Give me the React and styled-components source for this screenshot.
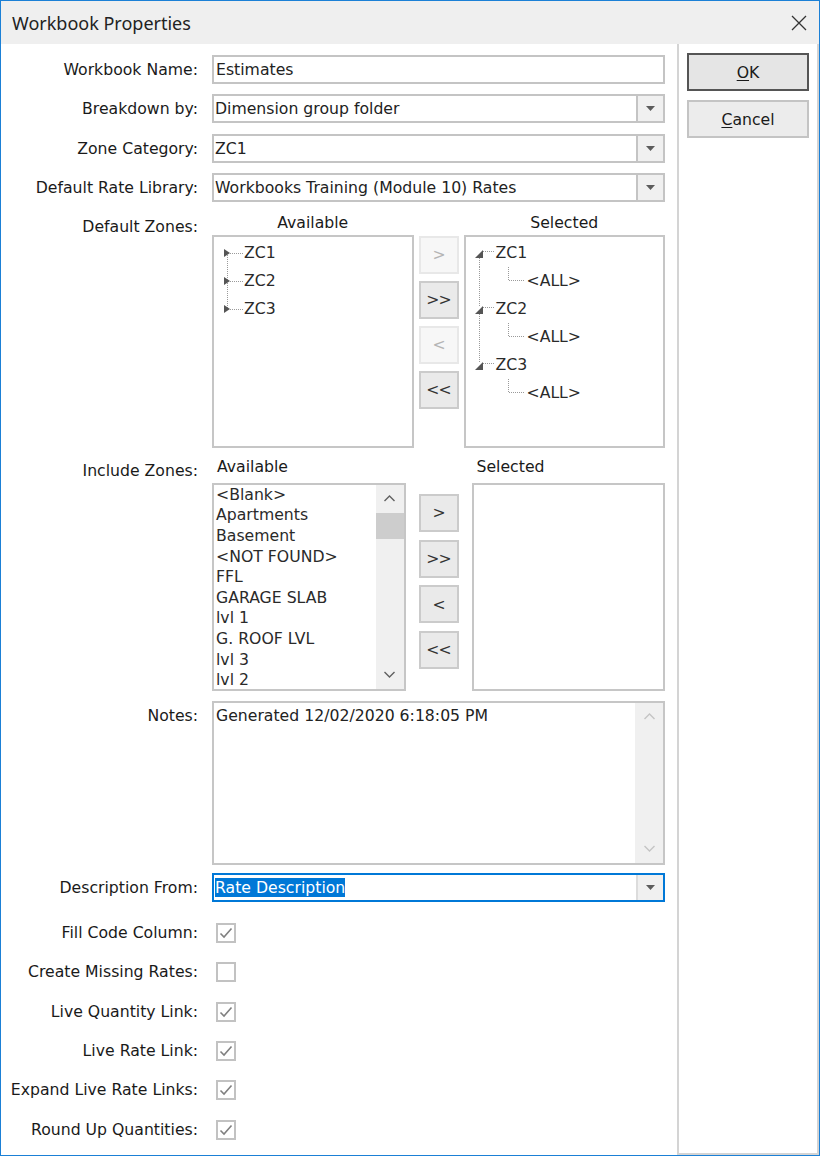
import styled, { createGlobalStyle } from "styled-components";

const GlobalStyle = createGlobalStyle`
  html, body {
    margin: 0;
    padding: 0;
    background: #ffffff;
  }
  body {
    font-family: "DejaVu Sans", Verdana, sans-serif;
    font-size: 15.7px;
    color: #1a1a1a;
  }
  * {
    box-sizing: border-box;
  }
`;

const Window = styled.div`
  width: 820px;
  height: 1156px;
  border: 1px solid #1b80d6;
  display: flex;
  flex-direction: column;
  background: #ffffff;
`;

const TitleBar = styled.div`
  height: 43px;
  flex: none;
  background: #efefef;
  display: flex;
  align-items: center;
  justify-content: space-between;
  padding: 0 12px 0 11px;
  font-family: "Noto Sans", "Open Sans", sans-serif;
  font-size: 18px;
  color: #222;
`;

const CloseIcon = () => (
  <svg width="16" height="16" viewBox="0 0 16 16">
    <path d="M1 1 L15 15 M15 1 L1 15" stroke="#333" strokeWidth="1.3" />
  </svg>
);

const Body = styled.div`
  flex: 1;
  display: flex;
  min-height: 0;
`;

const FormPanel = styled.div`
  width: 676px;
  flex: none;
  padding: 11px 12px 0 0;
  display: flex;
  flex-direction: column;
`;

const SidePanel = styled.div`
  flex: 1;
  border-left: 2px solid #d4d4d4;
  border-right: 2px solid #d4d4d4;
  border-bottom: 2px solid #d4d4d4;
  padding: 9px 8px;
  display: flex;
  flex-direction: column;
  gap: 9px;
`;

const DialogButton = styled.button`
  height: 38px;
  width: 100%;
  font-family: inherit;
  font-size: 15.7px;
  color: #1a1a1a;
  background: ${(p) => (p.$default ? "#e5e5e5" : "#ececec")};
  border: 2px solid ${(p) => (p.$default ? "#555555" : "#c4c4c4")};
  padding: 0;
`;

const Key = styled.span`
  text-decoration: underline;
  text-underline-offset: 2px;
`;

const Row = styled.div`
  display: grid;
  grid-template-columns: 197px 453px;
  column-gap: 14px;
  margin-top: ${(p) => p.$gap || 0}px;
  align-items: start;
`;

const Label = styled.div`
  text-align: right;
  white-space: nowrap;
  line-height: ${(p) => p.$lh || 29}px;
  padding-top: ${(p) => p.$pt || 0}px;
`;

const TextBox = styled.div`
  height: 29px;
  border: 2px solid #c4c4c4;
  padding-left: 2px;
  line-height: 25px;
  color: #222;
  white-space: nowrap;
`;

const Combo = styled.div`
  height: 29px;
  display: flex;
  border: 2px solid ${(p) => (p.$focused ? "#0078d7" : "#c4c4c4")};
  color: #222;
`;

const ComboValue = styled.div`
  flex: 1;
  padding-left: 1px;
  line-height: 25px;
  white-space: nowrap;
  span {
    background: ${(p) => (p.$focused ? "#0078d7" : "transparent")};
    color: ${(p) => (p.$focused ? "#ffffff" : "inherit")};
  }
`;

const DropButton = styled.div`
  width: 27px;
  flex: none;
  border-left: 2px solid ${(p) => (p.$focused ? "#dcdcdc" : "#c4c4c4")};
  background: #f0f0f0;
  display: flex;
  align-items: center;
  justify-content: center;
`;

const ComboBox = ({ value, focused }) => (
  <Combo $focused={focused}>
    <ComboValue $focused={focused}>
      <span>{value}</span>
    </ComboValue>
    <DropButton $focused={focused}>
      <svg width="9" height="5" viewBox="0 0 9 5">
        <path d="M0 0 H9 L4.5 5 Z" fill="#5c5c5c" />
      </svg>
    </DropButton>
  </Combo>
);

const DualList = styled.div`
  display: grid;
  grid-template-columns: 1fr 40px 1fr;
  grid-template-rows: 22px ${(p) => p.$h}px;
  column-gap: ${(p) => p.$cgap}px;
  row-gap: ${(p) => p.$rgap}px;
`;

const ListHeader = styled.div`
  line-height: 22px;
  text-align: ${(p) => (p.$left ? "left" : "center")};
  padding-left: ${(p) => (p.$left ? 5 : 0)}px;
  grid-column: ${(p) => p.$col};
`;

const ListBox = styled.div`
  border: 2px solid #c6c6c6;
  background: #fff;
  display: flex;
  overflow: hidden;
`;

const ListItems = styled.div`
  flex: 1;
  padding: ${(p) => (p.$tree ? "2px 0 0 0" : "0 0 0 2px")};
  color: #2a2a2a;
`;

const ListItem = styled.div`
  line-height: 20.6px;
  white-space: nowrap;
`;

const ButtonColumn = styled.div`
  display: flex;
  flex-direction: column;
  padding-top: ${(p) => p.$pt}px;
  gap: ${(p) => p.$gap}px;
`;

const MoveButton = styled.div`
  height: 38px;
  display: flex;
  align-items: center;
  justify-content: center;
  border: 2px solid ${(p) => (p.$disabled ? "#e8e8e8" : "#cbcbcb")};
  background: ${(p) => (p.$disabled ? "#f7f7f7" : "#eaeaea")};
  color: ${(p) => (p.$disabled ? "#b4b4b4" : "#333")};
  letter-spacing: -1px;
`;

const TreeRow = styled.div`
  height: 28px;
  display: flex;
  align-items: center;
  white-space: nowrap;
`;

const Dotted = ({ d }) => (
  <path d={d} stroke="#9a9a9a" strokeWidth="1" strokeDasharray="1 1" fill="none" />
);

const CollapsedNode = ({ label, first, last }) => (
  <TreeRow>
    <svg width="30" height="28" viewBox="0 0 30 28">
      <Dotted d={`M13.5 ${first ? 14 : 0} V${last ? 14 : 28}`} />
      <Dotted d="M16 14.5 H29" />
      <path d="M10 10 L16 14 L10 18 Z" fill="#555" />
    </svg>
    {label}
  </TreeRow>
);

const ExpandedNode = ({ label, first, last }) => (
  <TreeRow>
    <svg width="30" height="28" viewBox="0 0 30 28">
      {!first && <Dotted d="M13.5 0 V12" />}
      {!last && <Dotted d="M13.5 19 V28" />}
      <Dotted d="M17 12.5 H29" />
      <path d="M17 11 L17 19 L9 19 Z" fill="#555" />
    </svg>
    {label}
  </TreeRow>
);

const ChildNode = ({ label, lastParent }) => (
  <TreeRow>
    <svg width="61" height="28" viewBox="0 0 61 28">
      {!lastParent && <Dotted d="M13.5 0 V28" />}
      <Dotted d="M42.5 0 V13.5 H58" />
    </svg>
    {label}
  </TreeRow>
);

const ScrollBar = styled.div`
  width: 28px;
  flex: none;
  background: #f0f0f0;
  display: flex;
  flex-direction: column;
`;

const ScrollArrow = styled.div`
  height: 28px;
  flex: none;
  display: flex;
  align-items: center;
  justify-content: center;
`;

const ScrollTrack = styled.div`
  flex: 1;
`;

const ScrollThumb = styled.div`
  height: 26px;
  background: #cdcdcd;
`;

const Chevron = ({ up, color }) => (
  <svg width="11" height="7" viewBox="0 0 11 7">
    <path
      d={up ? "M0.5 6 L5.5 1 L10.5 6" : "M0.5 1 L5.5 6 L10.5 1"}
      stroke={color}
      strokeWidth="1.4"
      fill="none"
    />
  </svg>
);

const NotesBox = styled.div`
  height: 164px;
  border: 2px solid #c6c6c6;
  display: flex;
`;

const NotesText = styled.div`
  flex: 1;
  padding: 3px 2px;
  line-height: 20px;
  color: #222;
`;

const CheckRow = styled.div`
  height: 20px;
  display: flex;
  align-items: center;
  padding-left: 4px;
`;

const CheckBox = styled.div`
  width: 20px;
  height: 20px;
  border: 2px solid #c2c2c2;
  background: #fff;
  display: flex;
  align-items: center;
  justify-content: center;
`;

const CheckField = ({ checked }) => (
  <CheckRow>
    <CheckBox>
      {checked && (
        <svg width="14" height="12" viewBox="0 0 14 12">
          <path d="M1.5 6.5 L5 10 L12.5 1.5" stroke="#808080" strokeWidth="1.6" fill="none" />
        </svg>
      )}
    </CheckBox>
  </CheckRow>
);

const includeItems = [
  "<Blank>",
  "Apartments",
  "Basement",
  "<NOT FOUND>",
  "FFL",
  "GARAGE SLAB",
  "lvl 1",
  "G. ROOF LVL",
  "lvl 3",
  "lvl 2",
];

const checks = [
  { label: "Fill Code Column:", checked: true },
  { label: "Create Missing Rates:", checked: false },
  { label: "Live Quantity Link:", checked: true },
  { label: "Live Rate Link:", checked: true },
  { label: "Expand Live Rate Links:", checked: true },
  { label: "Round Up Quantities:", checked: true },
];

export default function App() {
  return (
    <>
      <GlobalStyle />
      <Window>
        <TitleBar>
          <span>Workbook Properties</span>
          <CloseIcon />
        </TitleBar>
        <Body>
          <FormPanel>
            <Row>
              <Label>Workbook Name:</Label>
              <TextBox>Estimates</TextBox>
            </Row>
            <Row $gap={10.3}>
              <Label>Breakdown by:</Label>
              <ComboBox value="Dimension group folder" />
            </Row>
            <Row $gap={10.3}>
              <Label>Zone Category:</Label>
              <ComboBox value="ZC1" />
            </Row>
            <Row $gap={10.3}>
              <Label>Default Rate Library:</Label>
              <ComboBox value="Workbooks Training (Module 10) Rates" />
            </Row>

            <Row $gap={10}>
              <Label $lh={22} $pt={4}>
                Default Zones:
              </Label>
              <DualList $h={213} $cgap={5} $rgap={1}>
                <ListHeader $col={1}>Available</ListHeader>
                <ListHeader $col={3}>Selected</ListHeader>
                <ListBox>
                  <ListItems $tree>
                    <CollapsedNode label="ZC1" first />
                    <CollapsedNode label="ZC2" />
                    <CollapsedNode label="ZC3" last />
                  </ListItems>
                </ListBox>
                <ButtonColumn $pt={1} $gap={7}>
                  <MoveButton $disabled>&gt;</MoveButton>
                  <MoveButton>&gt;&gt;</MoveButton>
                  <MoveButton $disabled>&lt;</MoveButton>
                  <MoveButton>&lt;&lt;</MoveButton>
                </ButtonColumn>
                <ListBox>
                  <ListItems $tree>
                    <ExpandedNode label="ZC1" first />
                    <ChildNode label="<ALL>" />
                    <ExpandedNode label="ZC2" />
                    <ChildNode label="<ALL>" />
                    <ExpandedNode label="ZC3" last />
                    <ChildNode label="<ALL>" lastParent />
                  </ListItems>
                </ListBox>
              </DualList>
            </Row>

            <Row $gap={8}>
              <Label $lh={22} $pt={4}>
                Include Zones:
              </Label>
              <DualList $h={208} $cgap={13} $rgap={5}>
                <ListHeader $col={1} $left>
                  Available
                </ListHeader>
                <ListHeader $col={3} $left>
                  Selected
                </ListHeader>
                <ListBox>
                  <ListItems>
                    {includeItems.map((item) => (
                      <ListItem key={item}>{item}</ListItem>
                    ))}
                  </ListItems>
                  <ScrollBar>
                    <ScrollArrow>
                      <Chevron up color="#606060" />
                    </ScrollArrow>
                    <ScrollThumb />
                    <ScrollTrack />
                    <ScrollArrow>
                      <Chevron color="#606060" />
                    </ScrollArrow>
                  </ScrollBar>
                </ListBox>
                <ButtonColumn $pt={11} $gap={7.7}>
                  <MoveButton>&gt;</MoveButton>
                  <MoveButton>&gt;&gt;</MoveButton>
                  <MoveButton>&lt;</MoveButton>
                  <MoveButton>&lt;&lt;</MoveButton>
                </ButtonColumn>
                <ListBox />
              </DualList>
            </Row>

            <Row $gap={10}>
              <Label $lh={22} $pt={4}>
                Notes:
              </Label>
              <NotesBox>
                <NotesText>Generated 12/02/2020 6:18:05 PM</NotesText>
                <ScrollBar>
                  <ScrollArrow>
                    <Chevron up color="#c4c4c4" />
                  </ScrollArrow>
                  <ScrollTrack />
                  <ScrollArrow>
                    <Chevron color="#c4c4c4" />
                  </ScrollArrow>
                </ScrollBar>
              </NotesBox>
            </Row>

            <Row $gap={8}>
              <Label>Description From:</Label>
              <ComboBox value="Rate Description" focused />
            </Row>

            {checks.map((c, i) => (
              <Row key={c.label} $gap={i === 0 ? 21 : 19.4}>
                <Label $lh={20}>{c.label}</Label>
                <CheckField checked={c.checked} />
              </Row>
            ))}
          </FormPanel>
          <SidePanel>
            <DialogButton $default>
              <Key>O</Key>K
            </DialogButton>
            <DialogButton>
              <Key>C</Key>ancel
            </DialogButton>
          </SidePanel>
        </Body>
      </Window>
    </>
  );
}
